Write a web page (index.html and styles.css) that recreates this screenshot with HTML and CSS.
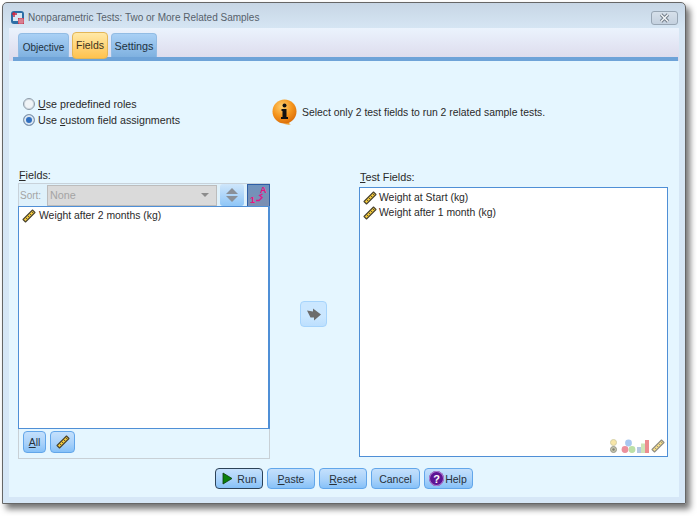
FILE: index.html
```html
<!DOCTYPE html>
<html lang="en">
<head>
<meta charset="utf-8">
<title>Nonparametric Tests: Two or More Related Samples</title>
<link rel="stylesheet" href="styles.css">
</head>
<body>
<svg class="defs" width="0" height="0" aria-hidden="true">
  <symbol id="ruler" viewBox="0 0 14 14">
    <path d="M1 10.500 10.500 1 13 3.500 3.500 13Z" fill="#f4ca3a" stroke="#4a4430" stroke-width="1.100" stroke-linejoin="round"/>
    <path d="M3.800 8.700 5.200 10.100M5.800 6.700 7.200 8.100M7.800 4.700 9.200 6.100M9.800 2.700 11.200 4.100" stroke="#3e3a2c" stroke-width=".9"/>
  </symbol>
</svg>
<div class="window">
  <header class="titlebar">
    <svg class="app-icon" width="15" height="15" viewBox="0 0 15 15">
      <rect x="1" y="1" width="13" height="13" rx="3" fill="#2c6ea6"/>
      <rect x="3" y="3" width="9" height="8" fill="#d8e8f4"/>
      <path d="M4 2v5M2 4h5" stroke="#c8203c" stroke-width="1.400"/>
      <rect x="8" y="8" width="6" height="6" fill="#c23a52"/>
      <path d="M8 10h6M8 12h6M10 8v6M12 8v6" stroke="#f0c8d0" stroke-width=".6"/>
    </svg>
    <span class="title">Nonparametric Tests: Two or More Related Samples</span>
    <span class="close"><svg width="13" height="10" viewBox="0 0 13 10"><path d="M3 1.500 10 8.500M10 1.500 3 8.500" stroke="#717c88" stroke-width="3.400"/><path d="M3 1.500 10 8.500M10 1.500 3 8.500" stroke="#f2f5f8" stroke-width="1.500"/></svg></span>
  </header>
  <div class="panel">
    <nav class="tabstrip">
      <span class="tab tab-objective">Objective</span>
      <span class="tab tab-active">Fields</span>
      <span class="tab tab-settings">Settings</span>
    </nav>
    <main class="content">
      <section class="options">
        <div class="roles">
          <label class="radio"><span class="radio-dot"></span><span><u>U</u>se predefined roles</span></label>
          <label class="radio"><span class="radio-dot radio-on"></span><span>Use <u>c</u>ustom field assignments</span></label>
        </div>
        <div class="notice">
          <svg width="26" height="27" viewBox="0 0 26 27">
            <defs><radialGradient id="orb" cx=".4" cy=".3" r=".75"><stop offset="0" stop-color="#ffd070"/><stop offset=".55" stop-color="#f5951c"/><stop offset="1" stop-color="#d86a08"/></radialGradient></defs>
            <path d="M13 24.500h-2c2 1 5 1.400 8 1-1.500-.6-2.500-1.500-2.500-3Z" fill="#f0a030"/>
            <circle cx="12.500" cy="12.500" r="12" fill="url(#orb)"/>
            <circle cx="12.500" cy="6.500" r="2" fill="#111"/>
            <path d="M9.500 10h5v8h1.500v2H9v-2h1.500v-6h-1Z" fill="#111"/>
          </svg>
          <span>Select only 2 test fields to run 2 related sample tests.</span>
        </div>
      </section>
      <section class="fields">
        <div class="source">
          <div class="field-label"><u>F</u>ields:</div>
          <div class="sort-row">
            <span class="sort-label">Sort:</span>
            <span class="combo"><span>None</span><i class="combo-arrow"></i></span>
            <span class="spin"><i class="spin-up"></i><i class="spin-down"></i></span>
            <span class="sort-btn">
              <svg width="21" height="21" viewBox="0 0 21 21"><path d="M8 15.500h3l3-3-2.500-2 3-1.500" fill="none" stroke="#e0188c" stroke-width="1.300"/><text class="glyph" x="12" y="8">A</text><text class="glyph" x="2" y="18">1</text></svg>
            </span>
          </div>
          <ul class="list list-source">
            <li class="item"><svg class="ruler" width="14" height="14"><use href="#ruler"/></svg>Weight after 2 months (kg)</li>
          </ul>
          <div class="tools">
            <button class="btn tool-all" type="button"><u>A</u>ll</button>
            <button class="btn tool-ruler" type="button"><svg width="14" height="14"><use href="#ruler"/></svg></button>
          </div>
        </div>
        <button class="arrow" type="button" aria-label="Move">
          <svg width="16" height="13" viewBox="0 0 16 13"><path d="M1 2.500 7 3.500V.5L15 6.500 8 12.500V9.500H4.500Z" fill="#6c6c6c"/></svg>
        </button>
        <div class="target">
          <div class="field-label target-label"><u>T</u>est Fields:</div>
          <div class="list-wrap">
            <ul class="list list-target">
              <li class="item"><svg class="ruler" width="14" height="14"><use href="#ruler"/></svg>Weight at Start (kg)</li>
              <li class="item"><svg class="ruler" width="14" height="14"><use href="#ruler"/></svg>Weight after 1 month (kg)</li>
            </ul>
            <svg class="measures" width="56" height="15" viewBox="0 0 56 15">
              <circle cx="4.500" cy="3.500" r="3" fill="#f8e6a8" stroke="#d4d0a8"/>
              <circle cx="4.500" cy="10.500" r="3" fill="#c8c8b0" stroke="#98988a"/>
              <circle cx="4.500" cy="10.500" r="1.200" fill="#807f70"/>
              <circle cx="19.500" cy="4" r="3.400" fill="#a8c8f0"/>
              <circle cx="16" cy="10.500" r="3.400" fill="#ec909c"/>
              <circle cx="23" cy="10.500" r="3.400" fill="#bce0a8"/>
              <rect x="28" y="8" width="4" height="6" fill="#b4c8e4"/>
              <rect x="32" y="4.500" width="4" height="9.500" fill="#cfe4b8"/>
              <rect x="36" y="1" width="4" height="13" fill="#ec8c90"/>
              <g opacity=".6" transform="translate(42 0)"><use href="#ruler" width="14" height="14"/></g>
            </svg>
          </div>
        </div>
      </section>
      <footer class="actions">
        <button class="btn act act-run" type="button"><svg width="11" height="13" viewBox="0 0 11 13"><path d="M1 1 10 6.500 1 12Z" fill="#0a800a" stroke="#0c3a0c" stroke-width=".8"/></svg><span>Run</span></button>
        <button class="btn act act-paste" type="button"><span><u>P</u>aste</span></button>
        <button class="btn act act-reset" type="button"><span><u>R</u>eset</span></button>
        <button class="btn act act-cancel" type="button"><span>Cancel</span></button>
        <button class="btn act act-help" type="button"><span class="help-q">?</span><span>Help</span></button>
      </footer>
    </main>
  </div>
</div>
</body>
</html>
```
FILE: styles.css
```css
* { box-sizing: border-box; }
html, body { margin: 0; padding: 0; background: #fff; }
body {
  width: 697px;
  height: 516px;
  padding: 2px 0 0 2px;
  overflow: hidden;
  font-family: "Liberation Sans", Arial, sans-serif;
  font-size: 10.400px;
  color: #2a2a2a;
}
.defs { position: absolute; }
u { text-underline-offset: 1px; }

.window {
  width: 684px;
  height: 502px;
  display: flex;
  flex-direction: column;
  border: 1px solid #666;
  border-radius: 5px 5px 0 0;
  background: linear-gradient(#c7d6e5 0, #d6e6f4 26px, #d6e7f7 100%);
  box-shadow: 4px 5px 6px rgba(0, 0, 0, .55);
}
.titlebar {
  height: 25px;
  flex: none;
  display: flex;
  align-items: center;
  padding: 4px 6px 0 7px;
}
.app-icon { flex: none; }
.title { margin-left: 3px; color: #57616b; font-size: 10px; }
.close {
  margin-left: auto;
  width: 27px;
  height: 14px;
  margin-top: 0;
  margin-right: 1px;
  display: flex;
  align-items: center;
  justify-content: center;
  border: 1px solid #98a6b4;
  border-radius: 3px;
  background: linear-gradient(#d6e0ea, #c4d1df);
}

.panel {
  flex: none;
  width: 670px;
  margin-left: 6px;
  display: flex;
  flex-direction: column;
}
.tabstrip {
  height: 33px;
  display: flex;
  align-items: flex-end;
  gap: 3px;
  padding: 0 1px 0 9px;
  background: linear-gradient(#ebf3fd, #dddced 90%);
  position: relative;
}
.tabstrip::after {
  content: "";
  position: absolute;
  left: 4px;
  right: 1px;
  bottom: 0;
  height: 4px;
  background: #6ea3d8;
}
.tab {
  position: relative;
  z-index: 1;
  height: 24px;
  margin-bottom: 4px;
  padding-top: 6px;
  border: 1px solid #92bce4;
  border-bottom: 0;
  border-radius: 4px 4px 0 0;
  background: linear-gradient(#a9d0f5, #7fb1e0);
  color: #22323f;
  font-size: 10px;
  text-align: center;
}
.tab-objective { width: 51px; padding-top: 8px; }
.tab-settings { width: 46px; font-size: 10.800px; }
.tab-active {
  width: 36px;
  height: 27px;
  margin-bottom: 2px;
  padding-top: 6px;
  border: 1px solid #e3b656;
  border-radius: 4px;
  background: linear-gradient(#ffe9a8, #ffc24e);
  color: #3c3320;
  font-size: 10.500px;
}

.content {
  height: 436px;
  display: flex;
  flex-direction: column;
  background: #e5f6ff;
}
.options {
  height: 107px;
  flex: none;
  display: flex;
  position: relative;
  padding: 36px 0 0 14px;
  font-size: 10.400px;
}
.roles { width: 249px; display: flex; flex-direction: column; gap: 3px; font-size: 10.700px; }
.radio { height: 13px; display: flex; align-items: center; gap: 3px; }
.radio-dot {
  width: 12px;
  height: 12px;
  border-radius: 50%;
  border: 1px solid #8d9ba8;
  background: #f0f4f7;
  box-shadow: inset 0 0 0 1px #d0d8e0;
}
.radio-on { background: #2f6fc0; box-shadow: inset 0 0 0 2px #dbe6f0; }
.notice {
  display: flex;
  align-items: center;
  gap: 4px;
  height: 27px;
  margin-top: 2px;
}

.fields {
  height: 290px;
  flex: none;
  display: grid;
  grid-template-columns: 252px 89px 309px;
  margin-left: 9px;
}
.source { display: flex; flex-direction: column; }
.field-label { height: 15px; padding-left: 1px; line-height: 14px; font-size: 10.800px; }
.sort-row {
  height: 23px;
  display: flex;
  align-items: center;
  padding: 0 0 0 1px;
  border: 1px solid #c8d2da;
  border-bottom: 0;
  border-right: 0;
  background: #dff1fb;
  color: #a4a4a4;
  font-size: 10.800px;
}
.sort-label { width: 27px; padding-left: 0; font-size: 10px; }
.combo {
  width: 171px;
  height: 21px;
  display: flex;
  align-items: center;
  justify-content: space-between;
  padding: 0 7px 0 2px;
  border: 1px solid #bcbcbc;
  background: #dadada;
}
.combo-arrow {
  width: 0;
  height: 0;
  border: 4px solid transparent;
  border-top: 4px solid #8c8c8c;
  border-bottom: 0;
}
.spin {
  width: 24px;
  height: 22px;
  margin-left: 3px;
  display: flex;
  flex-direction: column;
  align-items: center;
  justify-content: center;
  gap: 2px;
  border-radius: 3px;
  background: linear-gradient(#cfe6fb, #8fc6f7);
}
.spin-up, .spin-down { width: 0; height: 0; border: 6px solid transparent; }
.spin-up { border-top: 0; border-bottom: 6px solid #8a9098; }
.spin-down { border-bottom: 0; border-top: 6px solid #8a9098; }
.sort-btn {
  width: 23px;
  height: 23px;
  margin-left: 3px;
  display: flex;
  align-items: center;
  justify-content: center;
  border: 1px solid #2e5ea6;
  background: linear-gradient(#6f93bd, #7d8fb2);
}
.glyph { font-size: 9px; font-weight: 700; font-family: "Liberation Sans", sans-serif; fill: #e8147e; }

.list {
  margin: 0;
  padding: 0 0 0 2px;
  list-style: none;
  background: #fff;
  border: 1px solid #4f8fd6;
}
.list-source { height: 223px; padding-top: 1px; border-width: 1px 2px 1px 1px; }
.item { height: 15px; display: flex; align-items: center; gap: 3px; padding-left: 1px; white-space: nowrap; }
.ruler { flex: none; }
.list-target .item { gap: 2px; }
.list-target { height: 100%; padding-top: 2px; }

.tools {
  height: 30px;
  display: flex;
  align-items: flex-start;
  gap: 4px;
  padding: 2px 0 0 4px;
  border: 1px solid #c8d0d6;
  border-top: 0;
}
.btn {
  display: inline-flex;
  align-items: center;
  justify-content: center;
  padding: 0;
  border: 1px solid #62a6ea;
  border-radius: 4px;
  background: linear-gradient(#c4e0fc 0, #a9d2fa 55%, #86c1f8 100%);
  color: #26303a;
  font: inherit;
}
.tool-all { width: 23px; height: 22px; }
.tool-ruler { width: 25px; height: 22px; }

.arrow {
  justify-self: center;
  margin: 133px 2px 0 0;
  width: 27px;
  height: 26px;
  display: flex;
  align-items: center;
  justify-content: center;
  padding: 0;
  border: 1px solid #a6d4fc;
  border-radius: 4px;
  background: linear-gradient(#cbe7ff 60%, #bcdffe);
}

.target { display: flex; flex-direction: column; height: 289px; }
.target-label { height: 19px; padding: 2px 0 0 1px; }
.list-wrap { position: relative; flex: 1; }
.measures { position: absolute; right: 3px; bottom: 3px; }

.actions {
  flex: none;
  height: 37px;
  display: flex;
  justify-content: center;
  gap: 4px;
  padding-top: 10px;
  font-size: 10.500px;
}
.act { height: 21px; gap: 4px; }
.act-run { width: 48px; border-color: #2c4258; padding-left: 1px; }
.act-paste { width: 48px; }
.act-reset { width: 48px; }
.act-cancel { width: 49px; }
.act-help { width: 49px; gap: 1px; padding-right: 1px; }
.help-q {
  width: 15px;
  height: 15px;
  display: flex;
  align-items: center;
  justify-content: center;
  border-radius: 50%;
  background: #5e1494;
  box-shadow: inset 0 0 0 1px #b080d0;
  color: #fff;
  font-weight: 700;
  font-size: 11px;
}
```
